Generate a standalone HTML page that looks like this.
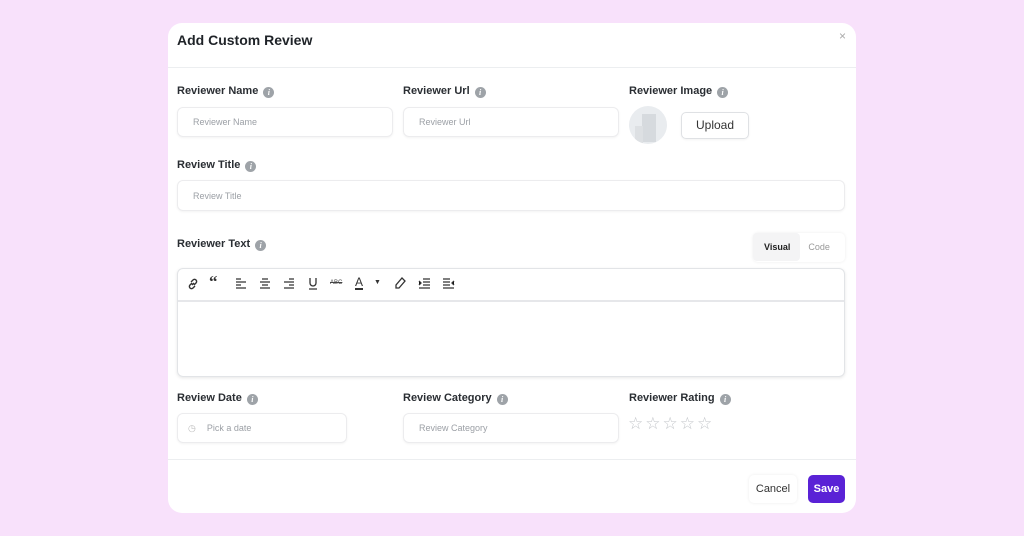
<!DOCTYPE html><html><head><style>
body{margin:0;width:1024px;height:536px;background:#f8e1fb;font-family:"Liberation Sans",sans-serif;position:relative;overflow:hidden}
.m{position:absolute;left:168px;top:23px;width:688px;height:490px;background:#fff;border-radius:14px}
.a{position:absolute}
.h{left:9px;top:9px;font-size:14px;font-weight:bold;color:#1f2328}
.l{font-size:11px;font-weight:bold;color:#2a2e33}
.i{display:inline-block;width:11px;height:11px;border-radius:50%;background:#9ea3a8;color:#fff;font-size:8px;text-align:center;line-height:11px;font-style:italic;vertical-align:-1px;margin-left:5px;font-family:"Liberation Serif",serif}
.in{border:1px solid #ececee;border-radius:6px;box-shadow:0 1px 2px rgba(0,0,0,.05);font-size:9px;color:#9ca0a6;box-sizing:border-box;padding-left:15px}
.ic{position:absolute;top:8px}
</style></head><body>
<div class="m">
<div class="a h">Add Custom Review</div>
<div class="a" style="right:10px;top:6px;color:#aaa;font-size:12px">×</div>
<div class="a" style="left:0;right:0;top:44px;height:1px;background:#eceef0"></div>

<div class="a l" style="left:9px;top:62px">Reviewer Name<span class="i">i</span></div>
<div class="a l" style="left:235px;top:62px">Reviewer Url<span class="i">i</span></div>
<div class="a l" style="left:461px;top:62px">Reviewer Image<span class="i">i</span></div>
<div class="a in" style="left:9px;top:84px;width:216px;height:30px;line-height:28px">Reviewer Name</div>
<div class="a in" style="left:235px;top:84px;width:216px;height:30px;line-height:28px">Reviewer Url</div>
<div class="a" style="left:461px;top:83px;width:38px;height:38px;border-radius:50%;background:#e9ecef;overflow:hidden"><div style="position:absolute;left:13px;top:8px;width:14px;height:28px;background:#d6dade"></div><div style="position:absolute;left:6px;top:20px;width:8px;height:18px;background:#dde0e3"></div></div>
<div class="a" style="left:513px;top:89px;width:66px;height:25px;border:1px solid #dfe1e4;border-radius:5px;font-size:12px;color:#333;text-align:center;line-height:25px;box-shadow:0 1px 2px rgba(0,0,0,.05)">Upload</div>

<div class="a l" style="left:9px;top:136px">Review Title<span class="i">i</span></div>
<div class="a in" style="left:9px;top:157px;width:668px;height:31px;line-height:30px">Review Title</div>

<div class="a l" style="left:9px;top:215px">Reviewer Text<span class="i">i</span></div>
<div class="a" style="left:585px;top:210px;width:92px;height:29px;border-radius:5px;box-shadow:0 0 3px rgba(0,0,0,.08);font-size:9px;line-height:28px"><span style="display:inline-block;background:#f4f4f5;padding:0 10px 0 11px;color:#222;font-weight:bold;border-radius:4px">Visual</span><span style="color:#999;margin-left:8px">Code</span></div>
<div class="a" style="left:9px;top:245px;width:668px;height:109px;border:1px solid #e2e4e7;border-radius:6px;box-shadow:0 1px 3px rgba(0,0,0,.1);box-sizing:border-box">
<div style="height:31px;border-bottom:2px solid #e6e7ea;position:relative">
<svg class="ic" style="left:8px" width="14" height="14" viewBox="0 0 14 14" fill="none" stroke="#333" stroke-width="1.4"><path d="M6 8l2-2M5 5l2-2a2 2 0 013 3l-2 2M9 9l-2 2a2 2 0 01-3-3l2-2"/></svg>
<div class="ic" style="left:31px;top:3px;font:bold 17px 'Liberation Serif';color:#333">“</div>
<svg class="ic" style="left:57px" width="12" height="14" viewBox="0 0 12 14" stroke="#333" stroke-width="1.3"><path d="M1 2h5M1 5h10M1 8h5M1 11h10"/></svg>
<svg class="ic" style="left:81px" width="12" height="14" viewBox="0 0 12 14" stroke="#333" stroke-width="1.3"><path d="M3 2h6M1 5h10M3 8h6M1 11h10"/></svg>
<svg class="ic" style="left:105px" width="12" height="14" viewBox="0 0 12 14" stroke="#333" stroke-width="1.3"><path d="M6 2h5M1 5h10M6 8h5M1 11h10"/></svg>
<svg class="ic" style="left:129px" width="12" height="14" viewBox="0 0 12 14" fill="none" stroke="#333" stroke-width="1.3"><path d="M3 1v5a3 3 0 006 0V1M2 12h8"/></svg>
<div class="ic" style="left:152px;top:11px;font-size:6px;color:#444;text-decoration:line-through">ABC</div>
<div class="ic" style="left:177px;top:7px;font-size:12px;color:#333;border-bottom:2px solid #333;line-height:12px">A</div>
<div class="ic" style="left:196px;top:10px;font-size:7px;color:#333">▼</div>
<svg class="ic" style="left:216px" width="12" height="14" viewBox="0 0 12 14" fill="none" stroke="#333" stroke-width="1.3"><path d="M8 1l3 3-6 7H2V8z"/></svg>
<svg class="ic" style="left:240px" width="13" height="14" viewBox="0 0 13 14" stroke="#333" stroke-width="1.3"><path d="M5 2h7M5 5h7M5 8h7M1 11h11M1 4l2 2-2 2"/></svg>
<svg class="ic" style="left:264px" width="13" height="14" viewBox="0 0 13 14" stroke="#333" stroke-width="1.3"><path d="M1 2h7M1 5h7M1 8h7M1 11h11M12 4l-2 2 2 2"/></svg>
</div></div>

<div class="a l" style="left:9px;top:369px">Review Date<span class="i">i</span></div>
<div class="a l" style="left:235px;top:369px">Review Category<span class="i">i</span></div>
<div class="a l" style="left:461px;top:369px">Reviewer Rating<span class="i">i</span></div>
<div class="a in" style="left:9px;top:390px;width:170px;height:30px;line-height:29px;padding-left:10px"><span style="color:#bbb;margin-right:11px">◷</span>Pick a date</div>
<div class="a in" style="left:235px;top:390px;width:216px;height:30px;line-height:29px">Review Category</div>
<div class="a" style="left:460px;top:391px;font-size:17px;color:#c4c7cb;letter-spacing:2px">☆☆☆☆☆</div>

<div class="a" style="left:0;right:0;top:436px;height:1px;background:#eceef0"></div>
<div class="a" style="left:581px;top:452px;width:48px;height:28px;border-radius:5px;box-shadow:0 0 3px rgba(0,0,0,.08);font-size:11px;color:#333;text-align:center;line-height:28px">Cancel</div>
<div class="a" style="left:640px;top:452px;width:37px;height:28px;border-radius:5px;background:#5a22d6;font-size:11px;color:#fff;font-weight:bold;text-align:center;line-height:28px">Save</div>
</div>
</body></html>
